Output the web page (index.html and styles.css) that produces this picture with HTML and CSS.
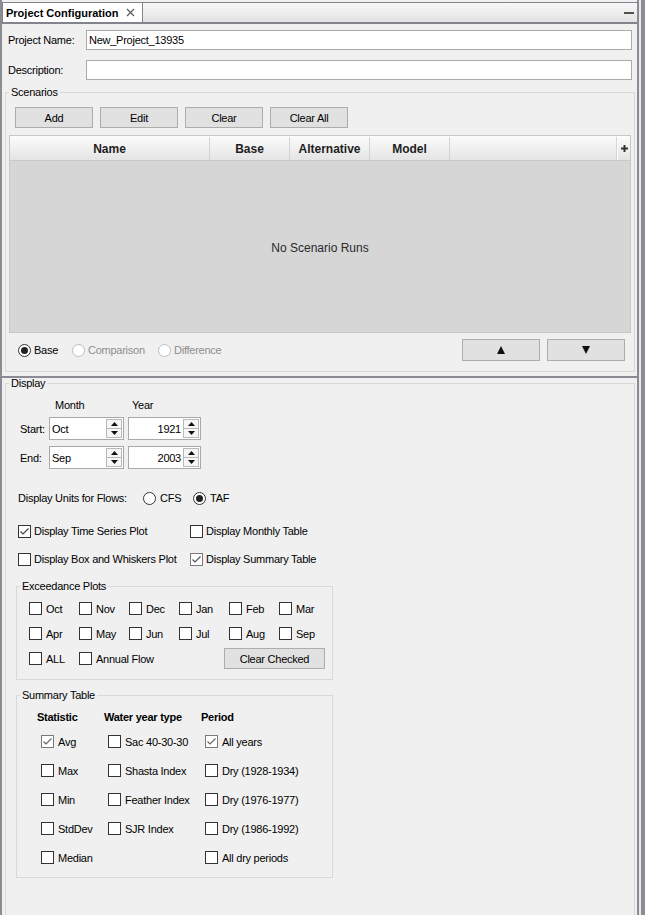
FILE: index.html
```html
<!DOCTYPE html>
<html>
<head>
<meta charset="utf-8">
<title>Project Configuration</title>
<link rel="stylesheet" href="styles.css">
</head>
<body>
<div class="window">
  <div class="main">
    <div class="tabstrip">
      <div class="tab">
        <span class="tab-title">Project Configuration</span>
        <svg class="tab-close" width="9" height="9" viewBox="0 0 9 9"><path d="M1 1L8 8M8 1L1 8" stroke="#5a5a5a" stroke-width="1.2" fill="none"/></svg>
      </div>
      <div class="tab-fill"><span class="minimize"></span></div>
    </div>

    <section class="pane-top">
      <div class="field-row">
        <label class="field-label">Project Name:</label>
        <input class="text-input" type="text" value="New_Project_13935" readonly>
      </div>
      <div class="field-row">
        <label class="field-label">Description:</label>
        <input class="text-input" type="text" value="" readonly>
      </div>

      <fieldset class="group scenarios">
        <legend>Scenarios</legend>
        <div class="btn-row">
          <button class="btn">Add</button>
          <button class="btn">Edit</button>
          <button class="btn">Clear</button>
          <button class="btn">Clear All</button>
        </div>
        <div class="scn-table">
          <div class="thead">
            <div class="th th-name">Name</div>
            <div class="th th-col">Base</div>
            <div class="th th-col">Alternative</div>
            <div class="th th-col">Model</div>
            <div class="th th-fill"></div>
            <div class="th th-plus"><svg width="7" height="7" viewBox="0 0 7 7"><path d="M3.5 0V7M0 3.5H7" stroke="#333" stroke-width="2"/></svg></div>
          </div>
          <div class="tbody">No Scenario Runs</div>
        </div>
        <div class="scn-foot">
          <div class="radio-opt opt-base"><span class="radio on"></span><span>Base</span></div>
          <div class="radio-opt opt-comp disabled"><span class="radio dis"></span><span>Comparison</span></div>
          <div class="radio-opt disabled"><span class="radio dis"></span><span>Difference</span></div>
          <div class="spacer"></div>
          <button class="btn arrow-btn"><svg width="8" height="8" viewBox="0 0 8 8"><path d="M0 8L4 0L8 8Z" fill="#111"/></svg></button>
          <button class="btn arrow-btn"><svg width="8" height="8" viewBox="0 0 8 8"><path d="M0 0L8 0L4 8Z" fill="#111"/></svg></button>
        </div>
      </fieldset>
    </section>

    <div class="divider"></div>

    <section class="pane-bottom">
      <fieldset class="group display">
        <legend>Display</legend>
        <div class="display-body">
          <div class="date-grid">
            <span></span>
            <span class="col-head month-head">Month</span>
            <span class="col-head year-head">Year</span>

            <span class="date-label">Start:</span>
            <div class="spinner">
              <span class="spin-value">Oct</span>
              <span class="spin-btns">
                <span class="spin-btn"><svg width="7" height="4" viewBox="0 0 7 4"><path d="M0 4L3.5 0L7 4Z" fill="#111"/></svg></span>
                <span class="spin-btn"><svg width="7" height="4" viewBox="0 0 7 4"><path d="M0 0L7 0L3.5 4Z" fill="#111"/></svg></span>
              </span>
            </div>
            <div class="spinner num">
              <span class="spin-value">1921</span>
              <span class="spin-btns">
                <span class="spin-btn"><svg width="7" height="4" viewBox="0 0 7 4"><path d="M0 4L3.5 0L7 4Z" fill="#111"/></svg></span>
                <span class="spin-btn"><svg width="7" height="4" viewBox="0 0 7 4"><path d="M0 0L7 0L3.5 4Z" fill="#111"/></svg></span>
              </span>
            </div>

            <span class="date-label">End:</span>
            <div class="spinner">
              <span class="spin-value">Sep</span>
              <span class="spin-btns">
                <span class="spin-btn"><svg width="7" height="4" viewBox="0 0 7 4"><path d="M0 4L3.5 0L7 4Z" fill="#111"/></svg></span>
                <span class="spin-btn"><svg width="7" height="4" viewBox="0 0 7 4"><path d="M0 0L7 0L3.5 4Z" fill="#111"/></svg></span>
              </span>
            </div>
            <div class="spinner num">
              <span class="spin-value">2003</span>
              <span class="spin-btns">
                <span class="spin-btn"><svg width="7" height="4" viewBox="0 0 7 4"><path d="M0 4L3.5 0L7 4Z" fill="#111"/></svg></span>
                <span class="spin-btn"><svg width="7" height="4" viewBox="0 0 7 4"><path d="M0 0L7 0L3.5 4Z" fill="#111"/></svg></span>
              </span>
            </div>
          </div>

          <div class="units-row">
            <span class="units-label">Display Units for Flows:</span>
            <div class="radio-opt unit-opt"><span class="radio"></span><span>CFS</span></div>
            <div class="radio-opt unit-opt"><span class="radio on"></span><span>TAF</span></div>
          </div>

          <div class="check-grid">
            <div class="check"><span class="cb"><svg width="11" height="11" viewBox="0 0 11 11"><path d="M1.5 5.5L4 8L9.5 2.5" fill="none" stroke="#444" stroke-width="1.2"/></svg></span><span>Display Time Series Plot</span></div>
            <div class="check"><span class="cb"></span><span>Display Monthly Table</span></div>
            <div class="check"><span class="cb"></span><span>Display Box and Whiskers Plot</span></div>
            <div class="check"><span class="cb soft"><svg width="11" height="11" viewBox="0 0 11 11"><path d="M1.5 5.5L4 8L9.5 2.5" fill="none" stroke="#555" stroke-width="1.2"/></svg></span><span>Display Summary Table</span></div>
          </div>

          <fieldset class="group sub exceed">
            <legend>Exceedance Plots</legend>
            <div class="ex-grid">
              <div class="check"><span class="cb"></span><span>Oct</span></div>
              <div class="check"><span class="cb"></span><span>Nov</span></div>
              <div class="check"><span class="cb"></span><span>Dec</span></div>
              <div class="check"><span class="cb"></span><span>Jan</span></div>
              <div class="check"><span class="cb"></span><span>Feb</span></div>
              <div class="check"><span class="cb"></span><span>Mar</span></div>
              <div class="check"><span class="cb"></span><span>Apr</span></div>
              <div class="check"><span class="cb"></span><span>May</span></div>
              <div class="check"><span class="cb"></span><span>Jun</span></div>
              <div class="check"><span class="cb"></span><span>Jul</span></div>
              <div class="check"><span class="cb"></span><span>Aug</span></div>
              <div class="check"><span class="cb"></span><span>Sep</span></div>
              <div class="check"><span class="cb"></span><span>ALL</span></div>
              <div class="check wide"><span class="cb"></span><span>Annual Flow</span></div>
              <button class="btn clear-btn">Clear Checked</button>
            </div>
          </fieldset>

          <fieldset class="group sub summary">
            <legend>Summary Table</legend>
            <div class="sum-grid">
              <span class="sum-head">Statistic</span>
              <span class="sum-head">Water year type</span>
              <span class="sum-head">Period</span>

              <div class="check"><span class="cb soft"><svg width="11" height="11" viewBox="0 0 11 11"><path d="M1.5 5.5L4 8L9.5 2.5" fill="none" stroke="#666" stroke-width="1.2"/></svg></span><span>Avg</span></div>
              <div class="check"><span class="cb"></span><span>Sac 40-30-30</span></div>
              <div class="check"><span class="cb soft"><svg width="11" height="11" viewBox="0 0 11 11"><path d="M1.5 5.5L4 8L9.5 2.5" fill="none" stroke="#666" stroke-width="1.2"/></svg></span><span>All years</span></div>

              <div class="check"><span class="cb"></span><span>Max</span></div>
              <div class="check"><span class="cb"></span><span>Shasta Index</span></div>
              <div class="check"><span class="cb"></span><span>Dry (1928-1934)</span></div>

              <div class="check"><span class="cb"></span><span>Min</span></div>
              <div class="check"><span class="cb"></span><span>Feather Index</span></div>
              <div class="check"><span class="cb"></span><span>Dry (1976-1977)</span></div>

              <div class="check"><span class="cb"></span><span>StdDev</span></div>
              <div class="check"><span class="cb"></span><span>SJR Index</span></div>
              <div class="check"><span class="cb"></span><span>Dry (1986-1992)</span></div>

              <div class="check"><span class="cb"></span><span>Median</span></div>
              <span></span>
              <div class="check"><span class="cb"></span><span>All dry periods</span></div>
            </div>
          </fieldset>
        </div>
      </fieldset>
    </section>
  </div>
  <div class="edge"></div>
</div>
</body>
</html>
```

FILE: styles.css
```css
* { box-sizing: border-box; }
html, body { margin: 0; padding: 0; }
body {
  width: 645px;
  height: 915px;
  overflow: hidden;
  background: #f0f0f0;
  font-family: "Liberation Sans", Arial, Helvetica, sans-serif;
  font-size: 11px;
  letter-spacing: -0.25px;
  color: #000;
}

.window { display: flex; height: 915px; }
.main {
  width: 639px;
  height: 915px;
  display: flex;
  flex-direction: column;
  border-left: 2px solid #8b8b93;
  border-right: 2px solid #8b8b93;
  overflow: hidden;
}
.edge {
  width: 6px;
  border-left: 2px solid #e9e9ec;
  background: #8b8b93;
}

/* tab strip */
.tabstrip {
  flex: none;
  display: flex;
  height: 24px;
  padding-top: 2px;
  border-bottom: 2px solid #83838b;
  background: #f0f0f0;
}
.tab {
  flex: none;
  width: 141px;
  display: flex;
  align-items: center;
  gap: 8px;
  padding-left: 3px;
  background: #fff;
  border: 1px solid #83838b;
  border-bottom: none;
  font-weight: bold;
  letter-spacing: 0;
}
.tab-close { flex: none; }
.tab-fill {
  flex: 1;
  display: flex;
  align-items: center;
  justify-content: flex-end;
  padding-right: 3px;
  border-top: 1px solid #83838b;
  background: linear-gradient(#f7f7f7, #e3e3e3);
}
.minimize { width: 10px; height: 2px; background: #505050; }

/* top pane */
.pane-top { flex: none; height: 352px; padding-top: 6px; }
.field-row { display: flex; align-items: center; height: 20px; padding-left: 6px; }
.field-row + .field-row { margin-top: 10px; }
.field-label { width: 78px; }
.text-input {
  width: 546px;
  height: 20px;
  margin: 0;
  padding: 0 2px;
  border: 1px solid #ababab;
  background: #fff;
  font: inherit;
  letter-spacing: inherit;
  color: #000;
  outline: none;
}

.group {
  margin: 0;
  padding: 0;
  border: 1px solid #d9d9d9;
  min-width: 0;
}
.group > legend {
  padding: 0 2px;
  margin-left: 3px;
  line-height: 13px;
  font-size: 11px;
}

.scenarios { margin: 6px 0 0 3px; width: 630px; padding: 8px 0 10px; }

.btn {
  margin: 0;
  padding: 0;
  font: inherit;
  letter-spacing: inherit;
  color: #000;
  background: #e1e1e1;
  border: 1px solid #adadad;
  display: flex;
  align-items: center;
  justify-content: center;
}
.btn-row { display: flex; gap: 7px; margin-left: 9px; }
.btn-row .btn { width: 78px; height: 21px; }

.scn-table {
  margin: 7px 3px 0;
  height: 198px;
  border: 1px solid #c8c8c8;
  display: flex;
  flex-direction: column;
  background: #d6d6d6;
}
.thead {
  flex: none;
  display: flex;
  height: 25px;
  padding-top: 1px;
  border-bottom: 1px solid #c8c8c8;
  background: linear-gradient(#fcfcfc, #e4e4e4);
  font-size: 12px;
  font-weight: bold;
  letter-spacing: 0;
  color: #1e1e1e;
}
.th {
  flex: none;
  display: flex;
  align-items: center;
  justify-content: center;
  border-right: 1px solid #d3d3d3;
}
.th-name { width: 200px; }
.th-col { width: 80px; }
.th-fill { width: 167px; }
.th-plus { width: 13px; border-right: none; border-left: 1px solid #fff; }
.tbody {
  flex: 1;
  display: flex;
  align-items: center;
  justify-content: center;
  padding-top: 2px;
  font-size: 12px;
  letter-spacing: 0;
  color: #2a2a2a;
}

.scn-foot {
  display: flex;
  align-items: center;
  height: 22px;
  margin-top: 6px;
  padding: 0 9px 0 12px;
}
.radio-opt { display: flex; align-items: center; gap: 3px; }
.opt-base { width: 54px; }
.opt-comp { width: 86px; }
.disabled { color: #8d8d8d; }
.spacer { flex: 1; }
.arrow-btn { width: 78px; height: 22px; }
.arrow-btn + .arrow-btn { margin-left: 7px; }

.radio {
  flex: none;
  width: 13px;
  height: 13px;
  border: 1px solid #333;
  border-radius: 50%;
  background: #fff;
  display: flex;
  align-items: center;
  justify-content: center;
}
.radio.on::after {
  content: "";
  width: 7px;
  height: 7px;
  border-radius: 50%;
  background: #222;
}
.radio.dis { border-color: #bdbdbd; }

.cb {
  flex: none;
  width: 13px;
  height: 13px;
  border: 1px solid #333;
  background: #fff;
  display: inline-flex;
  align-items: center;
  justify-content: center;
}
.cb.soft { border-color: #7a7a7a; }
.check { display: flex; align-items: center; gap: 4px; white-space: nowrap; }

.divider { flex: none; height: 2px; background: #8b8b93; }

/* bottom pane */
.pane-bottom { flex: 1; min-height: 0; }
.display { margin: -1px 0 0 3px; width: 630px; height: 560px; }
.display-body { padding: 8px 0 0 10px; }

.date-grid {
  display: grid;
  grid-template-columns: 26px 75px 73px;
  grid-template-rows: 13px 23px 23px;
  column-gap: 4px;
  row-gap: 6px;
  align-items: center;
  margin-left: 3px;
}
.month-head { padding-left: 6px; }
.year-head { padding-left: 4px; }
.date-label { padding-left: 1px; }

.spinner {
  display: flex;
  align-items: stretch;
  height: 23px;
  border: 1px solid #a9a9a9;
  background: #fff;
  padding: 1px 1px 1px 0;
}
.spin-value { flex: 1; display: flex; align-items: center; padding-left: 2px; }
.spinner.num .spin-value { justify-content: flex-end; padding-right: 2px; }
.spin-btns { flex: none; width: 16px; display: flex; flex-direction: column; }
.spin-btn {
  flex: 1;
  display: flex;
  align-items: center;
  justify-content: center;
  border: 1px solid #b9b9b9;
  background: #f6f6f6;
}
.spin-btn + .spin-btn { border-top: none; }

.units-row {
  display: flex;
  align-items: center;
  height: 14px;
  margin-top: 22px;
  padding-left: 2px;
}
.units-label { width: 125px; }
.unit-opt { width: 50px; gap: 4px; }

.check-grid {
  display: grid;
  grid-template-columns: 172px auto;
  grid-auto-rows: 14px;
  row-gap: 14px;
  margin-top: 19px;
  padding-left: 2px;
}
.check-grid .check { gap: 3px; }

.sub { width: 317px; }
.exceed { margin-top: 14px; padding: 3px 0 8px; }
.ex-grid {
  display: grid;
  grid-template-columns: repeat(6, 50px);
  grid-auto-rows: 25px;
  align-items: center;
  padding-left: 12px;
}
.ex-grid .wide { grid-column: 2 / 5; }
.clear-btn {
  grid-column: 5 / 7;
  justify-self: end;
  margin-right: 4px;
  width: 101px;
  height: 21px;
}

.summary { margin-top: 9px; padding: 8px 0 5px; }
.sum-grid {
  display: grid;
  grid-template-columns: 67px 97px auto;
  grid-template-rows: 17px repeat(5, 29px);
  align-items: center;
  padding-left: 20px;
}
.sum-head { font-weight: bold; align-self: start; line-height: 14px; }
.sum-grid .check { margin-left: 4px; }
```
